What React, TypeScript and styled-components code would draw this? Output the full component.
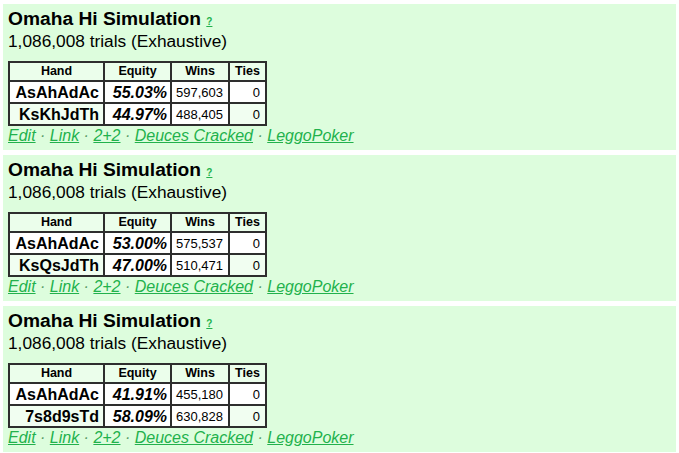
import styled, { createGlobalStyle } from 'styled-components';

const GlobalStyle = createGlobalStyle`
  html, body {
    margin: 0;
    padding: 0;
    background: #ffffff;
    font-family: "Liberation Sans", Arial, sans-serif;
    color: #000;
  }
`;

const Page = styled.div`
  display: flex;
  flex-direction: column;
  gap: 5px;
  padding: 4px 3px 0 3px;
`;

const Panel = styled.div`
  background: #ddfddd;
  padding: 3px 5px 5px 5px;
`;

const Title = styled.h2`
  margin: 0;
  font-size: 19.2px;
  line-height: 24px;
  font-weight: bold;
`;

const HelpLink = styled.a`
  font-size: 10px;
  line-height: 0;
  font-weight: bold;
  color: #22b14c;
  text-decoration: underline;
`;

const Trials = styled.div`
  font-size: 17.3px;
  line-height: 20px;
  margin-bottom: 10px;
`;

const Table = styled.table`
  border: 1px solid #2e2e2e;
  border-spacing: 0;
  border-collapse: separate;
  table-layout: fixed;
  width: 259px;
`;

const Th = styled.th<{ w: number }>`
  box-sizing: border-box;
  width: ${p => p.w}px;
  border: 1px solid #2e2e2e;
  background: #ebfeeb;
  font-size: 12.5px;
  line-height: 17px;
  padding: 0;
  text-align: center;
`;

const Td = styled.td<{ tint?: boolean }>`
  border: 1px solid #2e2e2e;
  background: ${p => (p.tint ? '#f1fef1' : '#ffffff')};
  padding: 1px 4px 0 2px;
  line-height: 19px;
  text-align: right;
  white-space: nowrap;
`;

const HandCell = styled(Td)`
  font-size: 16px;
  font-weight: bold;
`;

const EquityCell = styled(Td)`
  font-size: 16px;
  font-weight: bold;
  font-style: italic;
  padding-right: 3px;
`;

const NumCell = styled(Td)`
  font-size: 13px;
  padding-right: 5px;
`;

const Links = styled.div`
  margin-top: 1px;
  font-size: 16px;
  line-height: 18px;
  font-style: italic;
  color: #5a9a66;
  white-space: nowrap;
`;

const Link = styled.a`
  color: #22b14c;
  text-decoration: underline;
`;

type Row = { hand: string; equity: string; wins: string; ties: string };

const sims: Row[][] = [
  [
    { hand: 'AsAhAdAc', equity: '55.03%', wins: '597,603', ties: '0' },
    { hand: 'KsKhJdTh', equity: '44.97%', wins: '488,405', ties: '0' },
  ],
  [
    { hand: 'AsAhAdAc', equity: '53.00%', wins: '575,537', ties: '0' },
    { hand: 'KsQsJdTh', equity: '47.00%', wins: '510,471', ties: '0' },
  ],
  [
    { hand: 'AsAhAdAc', equity: '41.91%', wins: '455,180', ties: '0' },
    { hand: '7s8d9sTd', equity: '58.09%', wins: '630,828', ties: '0' },
  ],
];

const linkNames = ['Edit', 'Link', '2+2', 'Deuces Cracked', 'LeggoPoker'];

export default function App() {
  return (
    <>
      <GlobalStyle />
      <Page>
        {sims.map((rows, i) => (
          <Panel key={i}>
            <Title>
              Omaha Hi Simulation <HelpLink href="#">?</HelpLink>
            </Title>
            <Trials>1,086,008 trials (Exhaustive)</Trials>
            <Table>
              <thead>
                <tr>
                  <Th w={95}>Hand</Th>
                  <Th w={67}>Equity</Th>
                  <Th w={58}>Wins</Th>
                  <Th w={37}>Ties</Th>
                </tr>
              </thead>
              <tbody>
                {rows.map((r, j) => (
                  <tr key={r.hand}>
                    <HandCell tint={j === 1}>{r.hand}</HandCell>
                    <EquityCell>{r.equity}</EquityCell>
                    <NumCell>{r.wins}</NumCell>
                    <NumCell tint={j === 1}>{r.ties}</NumCell>
                  </tr>
                ))}
              </tbody>
            </Table>
            <Links>
              {linkNames.map((name, k) => (
                <span key={name}>
                  {k > 0 && ' · '}
                  <Link href="#">{name}</Link>
                </span>
              ))}
            </Links>
          </Panel>
        ))}
      </Page>
    </>
  );
}
